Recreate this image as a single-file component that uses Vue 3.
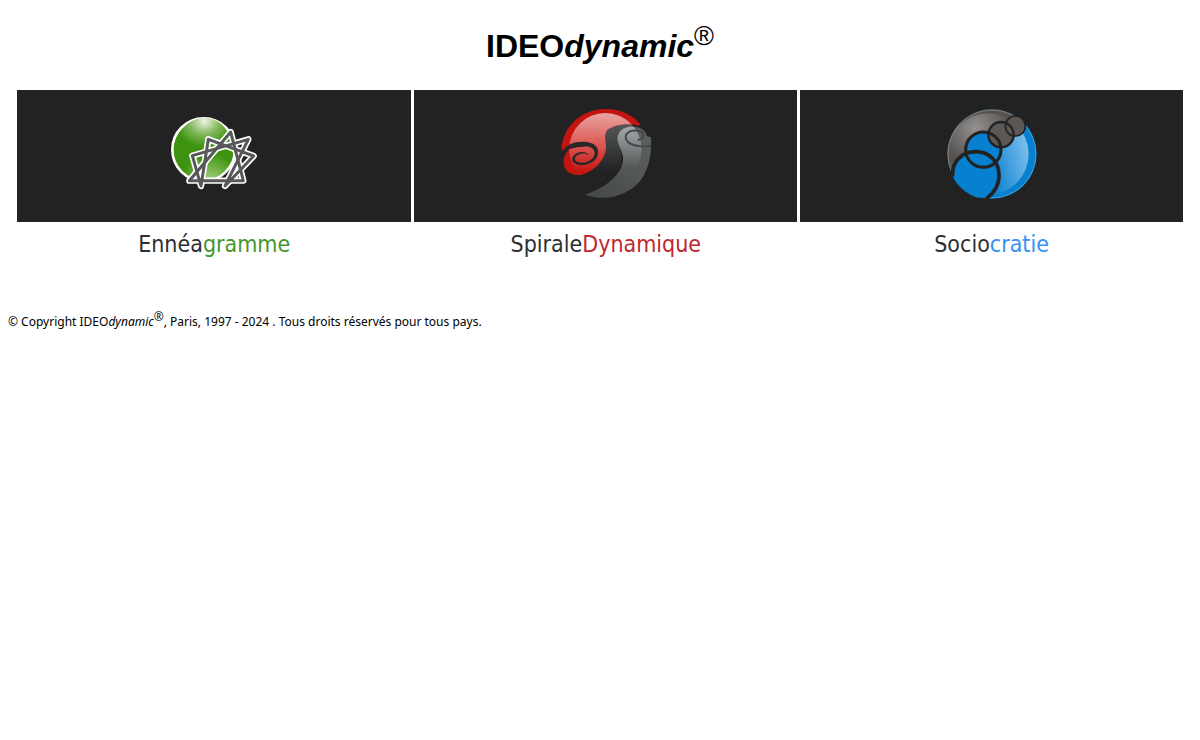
<template>

<main class="page">

    <h1 class="title">IDEO<em>dynamic</em><sup>®</sup></h1>

    <!-- Sites -->

    <nav class="sites">

        <a class="site" href="#enneagramme">

            <span class="banner">

                <svg class="logo" viewBox="-3 -12 330 330" aria-hidden="true">
                    <defs>
                        <radialGradient id="green-ball" cx="50%" cy="8%" r="62%">
                            <stop offset="0" stop-color="#edf4e4" />
                            <stop offset="0.5" stop-color="#85b85c" />
                            <stop offset="1" stop-color="#3d930f" />
                        </radialGradient>
                        <radialGradient id="green-base" cx="60%" cy="100%" r="45%">
                            <stop offset="0" stop-color="#a5d383" />
                            <stop offset="1" stop-color="#3d930f" />
                        </radialGradient>
                    </defs>
                    <circle cx="131" cy="134" r="94" fill="url(#green-base)" stroke="#fff" stroke-width="8" />
                    <ellipse cx="133" cy="101" rx="72" ry="62" fill="url(#green-ball)" />
                    <g fill="none" stroke-linejoin="round">
                        <g stroke="#fff" stroke-width="19">
                            <path :d="triangle" />
                            <path :d="hexad" />
                        </g>
                        <g stroke="#58585a" stroke-width="9">
                            <path :d="triangle" />
                            <path :d="hexad" />
                        </g>
                    </g>
                </svg>

            </span>

            <span class="name">Ennéa<span class="green">gramme</span></span>

        </a>

        <a class="site" href="#spirale-dynamique">

            <span class="banner">

                <svg class="logo" viewBox="2 3 330 330" aria-hidden="true">
                    <defs>
                        <linearGradient id="red-shine" x1="0" y1="0" x2="0" y2="1">
                            <stop offset="0" stop-color="#e8a5a2" />
                            <stop offset="0.45" stop-color="#dc5652" />
                            <stop offset="0.8" stop-color="#c51712" />
                        </linearGradient>
                        <linearGradient id="grey-tail" x1="0.8" y1="0" x2="0.4" y2="1">
                            <stop offset="0" stop-color="#5c6061" />
                            <stop offset="0.5" stop-color="#56595a" />
                            <stop offset="1" stop-color="#484b4c" />
                        </linearGradient>
                        <linearGradient id="grey-shine-top" x1="0" y1="0" x2="0" y2="1">
                            <stop offset="0.2" stop-color="#a3a6a7" />
                            <stop offset="0.75" stop-color="#a3a6a7" stop-opacity="0" />
                        </linearGradient>
                        <linearGradient id="band-shine" x1="0" y1="0" x2="0" y2="1">
                            <stop offset="0" stop-color="#555758" />
                            <stop offset="1" stop-color="#222" />
                        </linearGradient>
                        <clipPath id="shine-circle">
                            <circle cx="165" cy="148" r="109" />
                        </clipPath>
                        <clipPath id="red-shape">
                            <path d="M33 153C36 77 95 27 166 27C209 27 247 43 271 74L263 77C237 68 190 73 170 91C157 112 171 132 166 151C159 188 121 223 84 225C56 226 38 207 40 183C41 169 46 157 56 149C47 147 39 149 33 153Z" />
                        </clipPath>
                        <clipPath id="tail-shape">
                            <path d="M203 106C211 82 241 76 262 82C278 86 287 97 290 109L302 112C304 151 299 193 280 227C251 278 175 310 104 284C151 270 201 237 215 196C229 156 194 137 203 106Z" />
                        </clipPath>
                    </defs>
                    <path d="M262 76C237 68 190 73 170 91C157 112 171 132 166 151C163 175 145 197 130 208L200 215C229 170 200 140 203 106C211 82 241 76 275 90Z" fill="url(#band-shine)" clip-path="url(#shine-circle)" />
                    <g clip-path="url(#red-shape)">
                        <rect x="25" y="20" width="260" height="220" fill="#c31510" />
                        <circle cx="165" cy="148" r="109" fill="url(#red-shine)" />
                    </g>
                    <path d="M33 156C50 130 80 123 108 126C132 128 146 142 143 161C139 183 115 196 92 195C69 194 59 179 70 167C82 153 107 153 116 166C104 158 88 158 78 168C68 178 76 188 94 188C115 188 133 175 133 159C132 145 119 138 99 140C73 141 52 148 33 156Z" fill="#292727" />
                    <g clip-path="url(#tail-shape)">
                        <rect x="95" y="70" width="215" height="230" fill="url(#grey-tail)" />
                        <circle cx="165" cy="148" r="109" fill="url(#grey-shine-top)" />
                    </g>
                    <path d="M302 137C262 144 228 133 226 112C226 95 248 88 265 93C285 99 283 117 262 120" fill="none" stroke="#45484a" stroke-width="6" />
                </svg>

            </span>

            <span class="name">Spirale<span class="red">Dynamique</span></span>

        </a>

        <a class="site" href="#sociocratie">

            <span class="banner">

                <svg class="logo" viewBox="0 3 330 330" aria-hidden="true">
                    <defs>
                        <linearGradient id="blue-shine" x1="0" y1="0.6" x2="1" y2="0.35">
                            <stop offset="0.45" stop-color="#0780d0" />
                            <stop offset="1" stop-color="#80c0ed" />
                        </linearGradient>
                        <radialGradient id="grey-shine" gradientUnits="userSpaceOnUse" cx="115" cy="85" r="105">
                            <stop offset="0" stop-color="#949290" />
                            <stop offset="1" stop-color="#555250" />
                        </radialGradient>
                        <clipPath id="globe">
                            <circle cx="165" cy="162" r="134" />
                        </clipPath>
                        <clipPath id="globe-inner">
                            <circle cx="153" cy="162" r="122" />
                        </clipPath>
                    </defs>
                    <g clip-path="url(#globe)">
                        <rect x="30" y="25" width="272" height="274" fill="#0780d0" />
                        <circle cx="153" cy="162" r="122" fill="url(#blue-shine)" />
                        <path d="M25 20H275L266 75L190 143L139 149L85 149L50 210L25 230Z" fill="#555250" />
                        <path d="M25 20H275L266 75L190 143L139 149L85 149L50 210L25 230Z" fill="url(#grey-shine)" clip-path="url(#globe-inner)" />
                        <circle cx="165" cy="162" r="132" fill="none" stroke="#fff" stroke-width="3" opacity="0.25" />
                        <path d="M25 200L45 215L51 242C70 270 96 288 120 292L151 292L140 305H90L30 260Z" fill="#222" />
                    </g>
                    <circle cx="139" cy="149" r="53" fill="#0780d0" />
                    <path d="M50 236C43 190 76 155 116 155C157 155 185 185 186 223C187 251 174 277 151 293H122C95 285 69 265 50 236Z" fill="#0780d0" />
                    <circle cx="192" cy="104" r="38" fill="#5b5855" />
                    <circle cx="235" cy="78" r="30" fill="#5b5855" />
                    <g fill="none" stroke="#222">
                        <circle cx="139" cy="149" r="53" stroke-width="9" />
                        <path d="M47 229C43 184 76 155 116 155C157 155 185 185 186 223C187 251 174 277 148 296" stroke-width="11" />
                        <circle cx="192" cy="104" r="38" stroke-width="7" />
                        <circle cx="235" cy="78" r="30" stroke-width="5" />
                    </g>
                </svg>

            </span>

            <span class="name">Socio<span class="blue">cratie</span></span>

        </a>

    </nav>

    <footer class="copyright">© Copyright IDEO<em>dynamic</em><sup>®</sup>, Paris, 1997 - 2024 . Tous droits réservés pour tous pays.</footer>

</main>

</template>

<script setup>

/**
 * Enneagram figure: triangle 9-3-6 and hexad 1-4-2-8-5-7
 */

const points = {

    9: [212, 81],

    1: [265, 103],

    2: [281, 153],

    3: [250, 227],

    4: [195, 243],

    5: [123, 243],

    6: [88, 227],

    7: [97, 152],

    8: [145, 103]
}

function figure(order)
{
    return 'M' + order.map((n) => points[n].join(' ')).join('L') + 'Z'
}

const triangle = figure([9, 3, 6])

const hexad = figure([1, 4, 2, 8, 5, 7])

</script>

<style>

body {

    margin: 0;

    background: #fff;
}

</style>

<style scoped>

.page {

    padding: 22px 8px;

    color: #000;
}

.title {

    margin: 0;

    font-family: "Liberation Sans", Arial, sans-serif;

    font-size: 32px;

    line-height: 48px;

    text-align: center;
}

.title sup {

    font-size: 27px;

    font-weight: 400;

    line-height: 0;
}

.sites {

    display: grid;

    grid-template-columns: 34fr 33fr 33fr;

    gap: 3px;

    margin: 20px 9px 0;
}

.site {

    color: #2c2f33;

    text-align: center;

    text-decoration: none;
}

.banner {

    display: flex;

    align-items: center;

    justify-content: center;

    height: 132px;

    background: #222;
}

.logo {

    width: 110px;

    height: 110px;
}

.name {

    display: block;

    padding-top: 4px;

    font-family: "DejaVu Sans Condensed", "DejaVu Sans", sans-serif;

    font-size: 23px;

    line-height: 36px;
}

.green {

    color: #46962b;
}

.red {

    color: #c1272d;
}

.blue {

    color: #3690f5;
}

.copyright {

    margin-top: 48px;

    font-family: "Noto Sans", sans-serif;

    font-size: 12px;

    line-height: 24px;
}

.copyright sup {

    font-family: "Open Sans", sans-serif;

    font-size: 12px;

    line-height: 0;
}

</style>
